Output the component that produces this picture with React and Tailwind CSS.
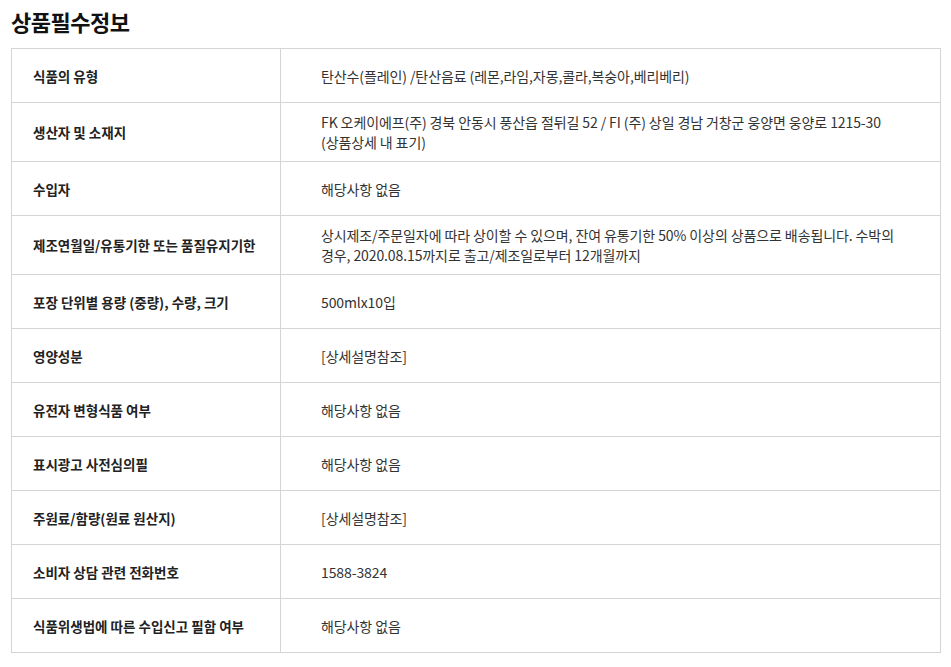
const ROWS = [
  { label: "식품의 유형", value: ["탄산수(플레인) /탄산음료 (레몬,라임,자몽,콜라,복숭아,베리베리)"] },
  {
    label: "생산자 및 소재지",
    value: ["FK 오케이에프(주) 경북 안동시 풍산읍 절뒤길 52 / FI (주) 상일 경남 거창군 웅양면 웅양로 1215-30", "(상품상세 내 표기)"],
  },
  { label: "수입자", value: ["해당사항 없음"] },
  {
    label: "제조연월일/유통기한 또는 품질유지기한",
    value: ["상시제조/주문일자에 따라 상이할 수 있으며, 잔여 유통기한 50% 이상의 상품으로 배송됩니다. 수박의", "경우, 2020.08.15까지로 출고/제조일로부터 12개월까지"],
  },
  { label: "포장 단위별 용량 (중량), 수량, 크기", value: ["500mlx10입"] },
  { label: "영양성분", value: ["[상세설명참조]"] },
  { label: "유전자 변형식품 여부", value: ["해당사항 없음"] },
  { label: "표시광고 사전심의필", value: ["해당사항 없음"] },
  { label: "주원료/함량(원료 원산지)", value: ["[상세설명참조]"] },
  { label: "소비자 상담 관련 전화번호", value: ["1588-3824"] },
  { label: "식품위생법에 따른 수입신고 필함 여부", value: ["해당사항 없음"] },
];

export default function App() {
  return (
    <div className="min-h-screen bg-white px-[11px] pt-[5px] text-[#222]" style={{ fontFamily: '"Noto Sans CJK KR", "Noto Sans", sans-serif' }}>
      <h2 className="mb-[11px] text-[22px] font-bold leading-[32px] tracking-[-0.5px] text-[#111]">상품필수정보</h2>
      <table className="w-[930px] border-collapse">
        <tbody>
          {ROWS.map((r) => (
            <tr key={r.label} className="h-[54px]">
              <th className="w-[269px] border border-[#d4d4d4] py-[9px] pl-[21px] text-left align-middle text-[13.5px] font-bold leading-[20px] text-[#222]">
                {r.label}
              </th>
              <td className="border border-[#d4d4d4] py-[9px] pl-[40px] pr-[20px] align-middle text-[14px] leading-[20px] tracking-[-0.1px] text-[#333]">
                {r.value.map((line, i) => (
                  <div key={i} className="whitespace-nowrap">
                    {line}
                  </div>
                ))}
              </td>
            </tr>
          ))}
        </tbody>
      </table>
    </div>
  );
}
